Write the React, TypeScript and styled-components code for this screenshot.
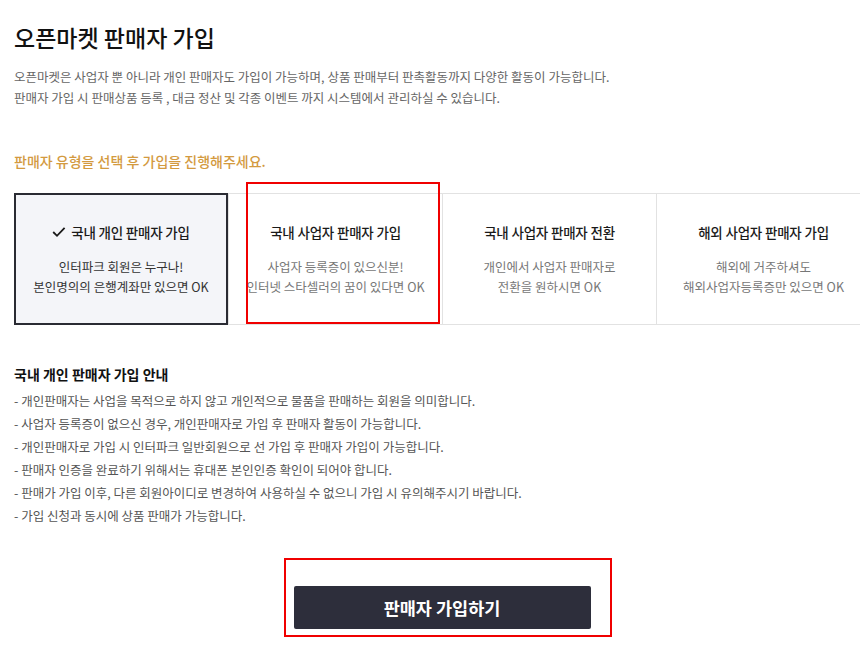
import styled, { createGlobalStyle } from "styled-components";

const GlobalStyle = createGlobalStyle`
  html {
    overflow-x: hidden;
  }
  body {
    margin: 0;
    padding: 0;
    background: #fff;
    font-family: "Noto Sans CJK KR", "Noto Sans", sans-serif;
    color: #222;
    overflow-x: hidden;
  }
`;

const Page = styled.div`
  width: 846px;
  padding: 20px 0 20px 14px;
`;

const Title = styled.h1`
  margin: 0;
  font-size: 23px;
  font-weight: 500;
  line-height: 34px;
  color: #111;
`;

const Intro = styled.p`
  margin: 12px 0 0;
  font-size: 12.5px;
  line-height: 21px;
  color: #666;
`;

const Notice = styled.h2`
  margin: 43px 0 0;
  font-size: 14px;
  font-weight: 500;
  line-height: 20px;
  color: #d39a3f;
`;

const CardRow = styled.div`
  position: relative;
  margin-top: 22px;
  display: grid;
  grid-template-columns: repeat(4, 214px);
  border-top: 1px solid #e2e2e2;
  border-bottom: 1px solid #e2e2e2;
`;

const Card = styled.div<{ $active?: boolean }>`
  box-sizing: border-box;
  display: flex;
  flex-direction: column;
  align-items: center;
  text-align: center;
  background: ${(p) => (p.$active ? "#f4f5f9" : "#fff")};
  border: ${(p) => (p.$active ? "2px solid #2a2b33" : "none")};
  margin: ${(p) => (p.$active ? "-1px 0" : "0")};
  height: ${(p) => (p.$active ? "132px" : "130px")};
  padding-top: ${(p) => (p.$active ? "27px" : "28px")};
  & + & {
    border-left: 1px solid #e2e2e2;
  }
`;

const CardTitle = styled.div`
  display: flex;
  align-items: center;
  gap: 5px;
  font-size: 13.5px;
  font-weight: 500;
  line-height: 20px;
  color: #1a1a1a;
  letter-spacing: -0.2px;
`;

const CardDesc = styled.div<{ $dark?: boolean }>`
  margin-top: 15px;
  font-size: 12.5px;
  line-height: 20px;
  color: ${(p) => (p.$dark ? "#333" : "#777")};
`;

const Highlight = styled.div<{ $left: number; $top: number; $w: number; $h: number }>`
  position: absolute;
  left: ${(p) => p.$left}px;
  top: ${(p) => p.$top}px;
  width: ${(p) => p.$w}px;
  height: ${(p) => p.$h}px;
  box-sizing: border-box;
  border: 2.5px solid #f00000;
  pointer-events: none;
`;

const Guide = styled.section`
  margin-top: 39px;
`;

const GuideTitle = styled.h3`
  margin: 0 0 5px;
  font-size: 14px;
  font-weight: 700;
  line-height: 20px;
  color: #111;
`;

const GuideList = styled.ul`
  margin: 0;
  padding: 0;
  list-style: none;
`;

const GuideItem = styled.li`
  font-size: 12.5px;
  line-height: 23px;
  color: #555;
`;

const ButtonArea = styled.div`
  position: relative;
  width: 856px;
  display: flex;
  justify-content: center;
  margin-top: 59px;
`;

const SubmitButton = styled.button`
  width: 297px;
  height: 43px;
  border: none;
  border-radius: 2px;
  background: #2d2e3b;
  color: #fff;
  font-family: inherit;
  font-size: 17.5px;
  font-weight: 700;
  cursor: pointer;
`;

const Check = () => (
  <svg width="14" height="12" viewBox="0 0 14 12" fill="none">
    <path d="M1.2 6 L5 9.8 L12.6 1.8" stroke="#1a1a1a" strokeWidth="1.8" />
  </svg>
);

const cards = [
  { title: "국내 개인 판매자 가입", desc: ["인터파크 회원은 누구나!", "본인명의의 은행계좌만 있으면 OK"], active: true },
  { title: "국내 사업자 판매자 가입", desc: ["사업자 등록증이 있으신분!", "인터넷 스타셀러의 꿈이 있다면 OK"] },
  { title: "국내 사업자 판매자 전환", desc: ["개인에서 사업자 판매자로", "전환을 원하시면 OK"] },
  { title: "해외 사업자 판매자 가입", desc: ["해외에 거주하셔도", "해외사업자등록증만 있으면 OK"] },
];

const guides = [
  "- 개인판매자는 사업을 목적으로 하지 않고 개인적으로 물품을 판매하는 회원을 의미합니다.",
  "- 사업자 등록증이 없으신 경우, 개인판매자로 가입 후 판매자 활동이 가능합니다.",
  "- 개인판매자로 가입 시 인터파크 일반회원으로 선 가입 후 판매자 가입이 가능합니다.",
  "- 판매자 인증을 완료하기 위해서는 휴대폰 본인인증 확인이 되어야 합니다.",
  "- 판매가 가입 이후, 다른 회원아이디로 변경하여 사용하실 수 없으니 가입 시 유의해주시기 바랍니다.",
  "- 가입 신청과 동시에 상품 판매가 가능합니다.",
];

export default function App() {
  return (
    <>
      <GlobalStyle />
      <Page>
        <Title>오픈마켓 판매자 가입</Title>
        <Intro>
          오픈마켓은 사업자 뿐 아니라 개인 판매자도 가입이 가능하며, 상품 판매부터 판촉활동까지 다양한 활동이 가능합니다.
          <br />
          판매자 가입 시 판매상품 등록 , 대금 정산 및 각종 이벤트 까지 시스템에서 관리하실 수 있습니다.
        </Intro>
        <Notice>판매자 유형을 선택 후 가입을 진행해주세요.</Notice>
        <CardRow>
          {cards.map((c) => (
            <Card key={c.title} $active={c.active}>
              <CardTitle>
                {c.active && <Check />}
                {c.title}
              </CardTitle>
              <CardDesc $dark={c.active}>
                {c.desc[0]}
                <br />
                {c.desc[1]}
              </CardDesc>
            </Card>
          ))}
          <Highlight $left={232} $top={-12} $w={194} $h={142} />
        </CardRow>
        <Guide>
          <GuideTitle>국내 개인 판매자 가입 안내</GuideTitle>
          <GuideList>
            {guides.map((g) => (
              <GuideItem key={g}>{g}</GuideItem>
            ))}
          </GuideList>
        </Guide>
        <ButtonArea>
          <SubmitButton>판매자 가입하기</SubmitButton>
          <Highlight $left={270} $top={-28} $w={328} $h={79} />
        </ButtonArea>
      </Page>
    </>
  );
}
